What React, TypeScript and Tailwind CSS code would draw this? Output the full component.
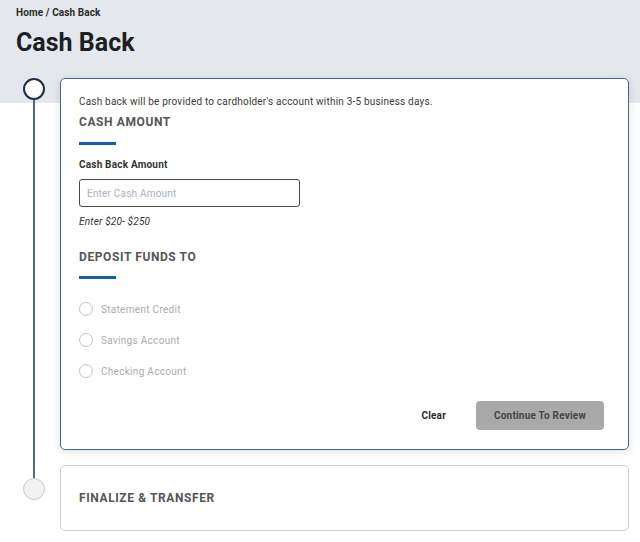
import React from "react";

function Radio({ label }: { label: string }) {
  return (
    <div className="flex items-center h-[14px]">
      <span className="w-[14px] h-[14px] rounded-full border-[1.5px] border-[#c4c4c4] bg-white" />
      <span className="ml-[8px] text-[10px] text-[#ababab] tracking-[0.3px]">{label}</span>
    </div>
  );
}

export default function App() {
  return (
    <div className="min-h-[542px] bg-white text-[#333]" style={{ fontFamily: "Roboto, 'Noto Sans', sans-serif" }}>
      <div className="bg-[#e4e7ec] h-[103px] px-[16px] pt-[6px]">
        <div className="text-[10px] font-bold text-[#2b2b2b] leading-[14px] tracking-[0.1px]">Home / Cash Back</div>
        <h1 className="mt-[8px] text-[25px] font-bold text-[#1c1f24] leading-[30px]">Cash Back</h1>
      </div>
      <div className="-mt-[25px] pr-[11px]">
        <div className="flex">
          <div className="w-[60px] flex-none pl-[23px]">
            <div className="w-[22px] h-full flex flex-col items-center">
              <span className="w-[22px] h-[22px] rounded-full border-[2.5px] border-[#1b2e4b] bg-white flex-none" />
              <span className="w-[2px] flex-1 bg-[#4d6a8c]" />
            </div>
          </div>
          <div className="flex-1 pb-[15px]">
            <div className="rounded-[5px] border-[1.5px] border-[#4a6584] bg-white shadow-[0_2px_8px_rgba(0,0,0,0.12)] px-[18px] pt-[16px] pb-[19px]">
              <p className="text-[10px] leading-[14px] text-[#3a3a3a] tracking-[0.2px]">
                Cash back will be provided to cardholder's account within 3-5 business days.
              </p>
              <h2 className="mt-[5px] text-[12px] leading-[16px] font-bold tracking-[0.6px] text-[#555]">CASH AMOUNT</h2>
              <div className="mt-[12px] w-[37px] h-[3px] bg-[#1561a9]" />
              <div className="mt-[13px] text-[10px] leading-[14px] font-bold text-[#333] tracking-[0.2px]">Cash Back Amount</div>
              <div className="mt-[7px] w-[221px] h-[28px] rounded-[3px] border-[1.5px] border-[#4a4a4a] flex items-center px-[7px]">
                <span className="text-[10px] text-[#a8b2bf] tracking-[0.2px]">Enter Cash Amount</span>
              </div>
              <div className="mt-[8px] text-[10px] leading-[14px] italic text-[#333] tracking-[0.2px]">Enter $20- $250</div>
              <h2 className="mt-[20px] text-[12px] leading-[16px] font-bold tracking-[0.6px] text-[#555]">DEPOSIT FUNDS TO</h2>
              <div className="mt-[11px] w-[37px] h-[3px] bg-[#1561a9]" />
              <div className="mt-[23px] flex flex-col gap-[17px]">
                <Radio label="Statement Credit" />
                <Radio label="Savings Account" />
                <Radio label="Checking Account" />
              </div>
              <div className="mt-[23px] flex items-center justify-end pr-[6px]">
                <span className="text-[10px] font-bold text-[#2b2b2b] tracking-[0.2px]">Clear</span>
                <button className="ml-[30px] w-[128px] h-[29px] rounded-[4px] bg-[#a9a9a9] text-[10px] font-bold text-[#444] tracking-[0.2px]">
                  Continue To Review
                </button>
              </div>
            </div>
          </div>
        </div>
        <div className="flex">
          <div className="w-[60px] flex-none pl-[23px]">
            <div className="w-[22px] flex flex-col items-center">
              <span className="w-[2px] h-[13px] bg-[#4d6a8c]" />
              <span className="w-[22px] h-[22px] rounded-full border-[1.5px] border-[#c8c8c8] bg-[#f2f2f2]" />
            </div>
          </div>
          <div className="flex-1">
            <div className="h-[66px] rounded-[5px] border-[1.5px] border-[#cfcfcf] bg-white flex items-center px-[18px]">
              <span className="text-[12px] font-bold tracking-[0.6px] text-[#555]">FINALIZE &amp; TRANSFER</span>
            </div>
          </div>
        </div>
      </div>
    </div>
  );
}
